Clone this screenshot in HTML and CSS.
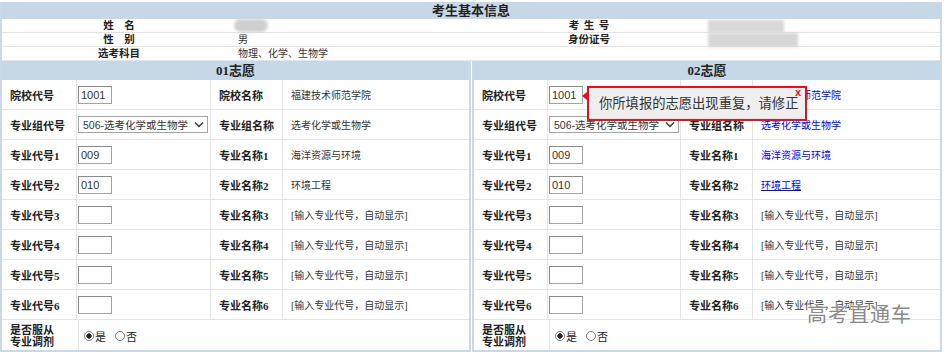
FILE: index.html
```html
<!DOCTYPE html>
<html lang="zh-CN">
<head>
<meta charset="utf-8">
<title>考生基本信息</title>
<link rel="stylesheet" href="styles.css">
</head>
<body>
<div class="page">
  <section class="info">
    <h2 class="info-head">考生基本信息</h2>
    <div class="info-row">
      <div class="info-label">姓　名</div>
      <div class="info-value"><span class="blur blur-name"></span></div>
      <div class="info-label">考 生 号</div>
      <div class="info-value"><span class="blur blur-id1"></span></div>
    </div>
    <div class="info-row">
      <div class="info-label">性　别</div>
      <div class="info-value">男</div>
      <div class="info-label">身份证号</div>
      <div class="info-value"><span class="blur blur-id2"></span></div>
    </div>
    <div class="info-row">
      <div class="info-label">选考科目</div>
      <div class="info-value">物理、化学、生物学</div>
      <div class="info-label"></div>
      <div class="info-value"></div>
    </div>
  </section>

  <div class="panels">
    <section class="panel panel-left">
      <h3 class="panel-head">01志愿</h3>
      <div class="row">
        <div class="cell label">院校代号</div>
        <div class="cell field"><input class="code" value="1001"></div>
        <div class="cell label">院校名称</div>
        <div class="cell value">福建技术师范学院</div>
      </div>
      <div class="row">
        <div class="cell label">专业组代号</div>
        <div class="cell field"><div class="select"><span>506-选考化学或生物学</span><svg width="10" height="7" viewBox="0 0 10 7"><polyline points="1,1.5 5,5.5 9,1.5" fill="none" stroke="#333" stroke-width="1.4"/></svg></div></div>
        <div class="cell label">专业组名称</div>
        <div class="cell value">选考化学或生物学</div>
      </div>
      <div class="row">
        <div class="cell label">专业代号1</div>
        <div class="cell field"><input class="code" value="009"></div>
        <div class="cell label">专业名称1</div>
        <div class="cell value">海洋资源与环境</div>
      </div>
      <div class="row">
        <div class="cell label">专业代号2</div>
        <div class="cell field"><input class="code" value="010"></div>
        <div class="cell label">专业名称2</div>
        <div class="cell value">环境工程</div>
      </div>
      <div class="row">
        <div class="cell label">专业代号3</div>
        <div class="cell field"><input class="code" value=""></div>
        <div class="cell label">专业名称3</div>
        <div class="cell value">[输入专业代号，自动显示]</div>
      </div>
      <div class="row">
        <div class="cell label">专业代号4</div>
        <div class="cell field"><input class="code" value=""></div>
        <div class="cell label">专业名称4</div>
        <div class="cell value">[输入专业代号，自动显示]</div>
      </div>
      <div class="row">
        <div class="cell label">专业代号5</div>
        <div class="cell field"><input class="code" value=""></div>
        <div class="cell label">专业名称5</div>
        <div class="cell value">[输入专业代号，自动显示]</div>
      </div>
      <div class="row">
        <div class="cell label">专业代号6</div>
        <div class="cell field"><input class="code" value=""></div>
        <div class="cell label">专业名称6</div>
        <div class="cell value">[输入专业代号，自动显示]</div>
      </div>
      <div class="row row-radio">
        <div class="cell label two-line">是否服从<br>专业调剂</div>
        <div class="cell radios">
          <label class="opt"><input type="radio" class="radio" name="tj1" checked>是</label>
          <label class="opt"><input type="radio" class="radio" name="tj1">否</label>
        </div>
      </div>
    </section>

    <section class="panel panel-right">
      <h3 class="panel-head">02志愿</h3>
      <div class="row">
        <div class="cell label">院校代号</div>
        <div class="cell field"><input class="code" value="1001"></div>
        <div class="cell label">院校名称</div>
        <div class="cell value link">福建技术师范学院</div>
      </div>
      <div class="row">
        <div class="cell label">专业组代号</div>
        <div class="cell field"><div class="select"><span>506-选考化学或生物学</span><svg width="10" height="7" viewBox="0 0 10 7"><polyline points="1,1.5 5,5.5 9,1.5" fill="none" stroke="#333" stroke-width="1.4"/></svg></div></div>
        <div class="cell label">专业组名称</div>
        <div class="cell value link">选考化学或生物学</div>
      </div>
      <div class="row">
        <div class="cell label">专业代号1</div>
        <div class="cell field"><input class="code" value="009"></div>
        <div class="cell label">专业名称1</div>
        <div class="cell value link">海洋资源与环境</div>
      </div>
      <div class="row">
        <div class="cell label">专业代号2</div>
        <div class="cell field"><input class="code" value="010"></div>
        <div class="cell label">专业名称2</div>
        <div class="cell value link"><u>环境工程</u></div>
      </div>
      <div class="row">
        <div class="cell label">专业代号3</div>
        <div class="cell field"><input class="code" value=""></div>
        <div class="cell label">专业名称3</div>
        <div class="cell value">[输入专业代号，自动显示]</div>
      </div>
      <div class="row">
        <div class="cell label">专业代号4</div>
        <div class="cell field"><input class="code" value=""></div>
        <div class="cell label">专业名称4</div>
        <div class="cell value">[输入专业代号，自动显示]</div>
      </div>
      <div class="row">
        <div class="cell label">专业代号5</div>
        <div class="cell field"><input class="code" value=""></div>
        <div class="cell label">专业名称5</div>
        <div class="cell value">[输入专业代号，自动显示]</div>
      </div>
      <div class="row">
        <div class="cell label">专业代号6</div>
        <div class="cell field"><input class="code" value=""></div>
        <div class="cell label">专业名称6</div>
        <div class="cell value">[输入专业代号，自动显示]</div>
      </div>
      <div class="row row-radio">
        <div class="cell label two-line">是否服从<br>专业调剂</div>
        <div class="cell radios">
          <label class="opt"><input type="radio" class="radio" name="tj2" checked>是</label>
          <label class="opt"><input type="radio" class="radio" name="tj2">否</label>
        </div>
      </div>
    </section>
  </div>

  <div class="tip">你所填报的志愿出现重复，请修正<span class="tip-close">x</span></div>
  <div class="watermark">高考直通车</div>
</div>
</body>
</html>
```

FILE: styles.css
```css
* { box-sizing: border-box; }

html, body {
  margin: 0;
  background: #ffffff;
}

.page {
  position: relative;
  width: 942px;
  padding-top: 2px;
  font-family: "Liberation Serif", "Noto Sans CJK SC", serif;
  color: #222;
}

/* ---------- top info block ---------- */
.info {
  border-left: 2px solid #c9d9e5;
  border-right: 2px solid #c9d9e5;
}

.info-head {
  margin: 0;
  height: 17px;
  line-height: 17px;
  background: #c6d8e6;
  text-align: center;
  font-size: 13px;
  font-weight: bold;
}

.info-row {
  display: grid;
  grid-template-columns: 234px 236px 234px 1fr;
  height: 14px;
  border-bottom: 1px solid #e3e3e3;
}

.info-label {
  text-align: center;
  font-weight: bold;
  font-size: 10.5px;
  line-height: 13px;
  word-spacing: 2px;
}

.info-value {
  position: relative;
  padding-left: 2px;
  font-size: 10px;
  line-height: 13px;
  color: #333;
}

.blur {
  display: block;
  background: #cfcfcf;
  filter: blur(1.5px);
}

.blur-name {
  width: 34px;
  height: 13px;
  margin: 0 0 0 -4px;
  border-radius: 7px;
}

.blur-id1 {
  width: 76px;
  height: 13px;
  margin-top: 1px;
  background: #d8d8d8;
}

.blur-id2 {
  width: 90px;
  height: 14px;
  margin-top: 0;
  background: #d6d6d6;
}

/* ---------- panels ---------- */
.panels {
  display: flex;
  gap: 1px;
}

.panel {
  border: 2px solid #c9d9e5;
  border-top: 0;
}

.panel-left { width: 471px; }
.panel-right { flex: 1; }

.panel-head {
  margin: 0;
  height: 19px;
  line-height: 19px;
  background: #c6d8e6;
  text-align: center;
  font-size: 13px;
  font-weight: bold;
}

.row {
  display: grid;
  grid-template-columns: 75px 134px 72px 1fr;
  height: 30px;
  border-bottom: 1px solid #e4e4e4;
}

.panel-right .row { grid-template-columns: 74px 133px 72px 1fr; }
.panel-right .row-radio { grid-template-columns: 76px 1fr; }

.cell {
  display: flex;
  align-items: center;
  padding-left: 8px;
  border-right: 1px solid #e4e4e4;
  min-width: 0;
}

.cell:last-child { border-right: 0; }

.label {
  font-size: 11px;
  font-weight: bold;
  color: #222;
  white-space: nowrap;
}

.value {
  font-size: 10px;
  color: #333;
  white-space: nowrap;
}

.link { color: #0000ff; }

.field { padding-left: 1px; }

.code {
  width: 34px;
  height: 18px;
  margin: 0;
  padding: 0 2px;
  border: 1px solid #a3a3a3;
  border-top-color: #8a8a8a;
  border-left-color: #8a8a8a;
  background: #fff;
  font-family: "Liberation Sans", Arial, sans-serif;
  font-size: 11px;
  color: #333;
  outline: none;
}

.select {
  display: flex;
  align-items: center;
  justify-content: space-between;
  width: 130px;
  height: 17px;
  padding: 0 3px 0 4px;
  border: 1px solid #a3a3a3;
  background: #fff;
  font-family: "Liberation Sans", "Noto Sans CJK SC", sans-serif;
  font-size: 10.5px;
  color: #333;
  white-space: nowrap;
}

.row-radio {
  grid-template-columns: 77px 1fr;
  border-bottom: 0;
}

.two-line {
  line-height: 12px;
  padding-top: 1px;
}

.radios {
  gap: 9px;
  padding-left: 5px;
  padding-top: 2px;
}

.opt {
  display: flex;
  align-items: center;
  gap: 1px;
  font-size: 11px;
  color: #222;
}

.radio {
  appearance: none;
  -webkit-appearance: none;
  width: 10px;
  height: 10px;
  margin: 0;
  border: 1px solid #7a7a7a;
  border-radius: 50%;
  background: #fff;
}

.radio:checked {
  background: radial-gradient(circle, #222 0 2.4px, #fff 2.9px);
}

/* ---------- overlays ---------- */
.tip {
  position: absolute;
  left: 587px;
  top: 86px;
  width: 220px;
  height: 35px;
  padding-left: 10px;
  border: 2px solid #e8101c;
  background: #efefef;
  font-family: "Noto Sans CJK SC", sans-serif;
  font-size: 13.3px;
  line-height: 30px;
  color: #333;
  white-space: nowrap;
}

.tip::before {
  content: "";
  position: absolute;
  left: -7px;
  top: 4px;
  border-top: 4px solid transparent;
  border-bottom: 4px solid transparent;
  border-right: 5px solid #e8101c;
}

.tip-close {
  position: absolute;
  top: -3px;
  right: 4px;
  font-family: "Liberation Sans", Arial, sans-serif;
  font-size: 11px;
  font-weight: bold;
  line-height: 14px;
  color: #e8101c;
}

.watermark {
  position: absolute;
  left: 807px;
  top: 301px;
  font-family: "Noto Sans CJK SC", sans-serif;
  font-size: 20px;
  line-height: 26px;
  color: #8a8a8a;
  letter-spacing: 1px;
  text-shadow: 0 0 2px #fff, 0 0 2px #fff;
}
```
